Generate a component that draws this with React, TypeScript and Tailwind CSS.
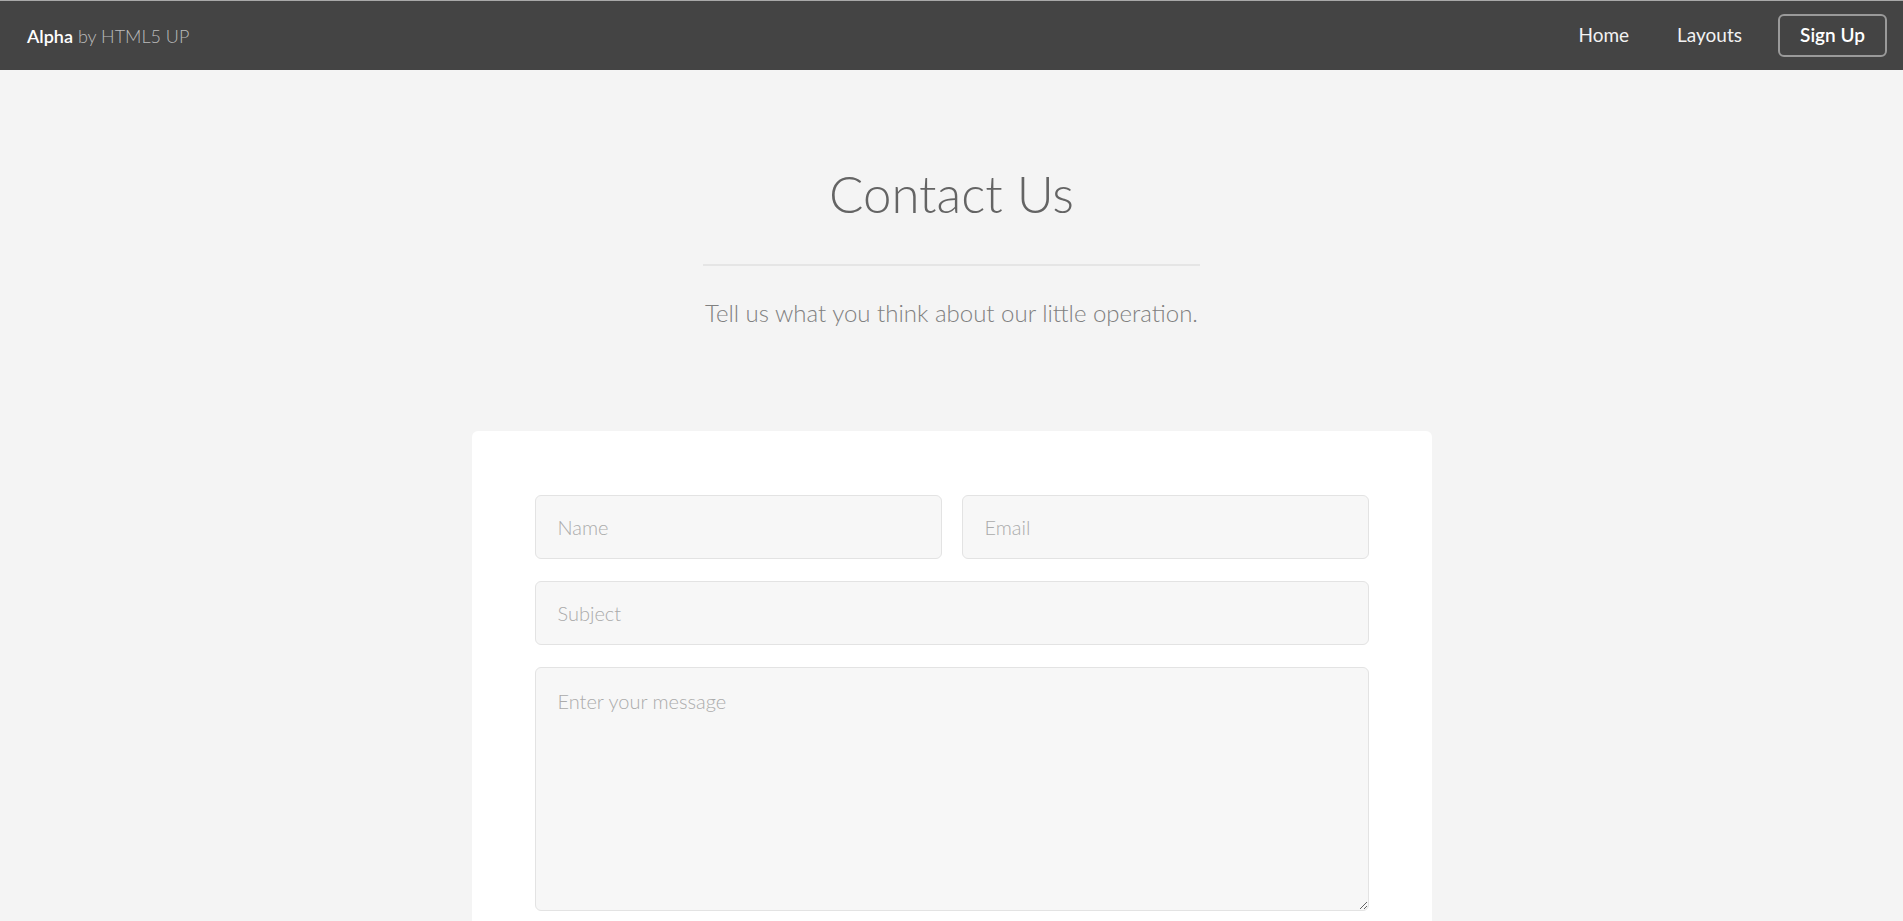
import React from "react";

export default function App() {
  const font = { fontFamily: "Lato, 'Open Sans', sans-serif" };
  return (
    <div className="min-h-screen bg-[#f4f4f4]" style={font}>
      <header className="h-[70px] bg-[#444444] border-t border-[#a9a9a9] flex items-center justify-between pl-[27px] pr-[16px]">
        <div className="text-[18px] leading-none">
          <span className="text-white font-semibold">Alpha</span>
          <span className="text-[#bbbbbb] font-light"> by HTML5 UP</span>
        </div>
        <nav className="flex items-center text-[19px] text-[#f2f2f2]">
          <a className="mr-[48px]">Home</a>
          <a className="mr-[36px]">Layouts</a>
          <a className="h-[43px] w-[109px] flex items-center justify-center rounded-[6px] border-2 border-[#9a9a9a] text-white font-semibold">
            Sign Up
          </a>
        </nav>
      </header>
      <main className="flex flex-col items-center">
        <h1 className="mt-[92px] text-[51px] leading-[64px] font-light text-[#646464]">Contact Us</h1>
        <div className="mt-[38px] w-[497px] h-[2px] bg-[#e5e5e5]" />
        <p className="mt-[30px] text-[24px] leading-[34px] font-light text-[#808080]">
          Tell us what you think about our little operation.
        </p>
        <div className="mt-[101px] w-[960px] bg-white rounded-t-[6px] px-[63px] pt-[64px] pb-[64px]">
          <div className="flex flex-col gap-[22px]">
            <div className="flex gap-[20px]">
              <input
                placeholder="Name"
                className="flex-1 h-[64px] px-[22px] rounded-[6px] border border-[#e3e3e3] bg-[#f7f7f7] text-[20px] font-light placeholder:text-[#ababab] outline-none"
              />
              <input
                placeholder="Email"
                className="flex-1 h-[64px] px-[22px] rounded-[6px] border border-[#e3e3e3] bg-[#f7f7f7] text-[20px] font-light placeholder:text-[#ababab] outline-none"
              />
            </div>
            <input
              placeholder="Subject"
              className="h-[64px] px-[22px] rounded-[6px] border border-[#e3e3e3] bg-[#f7f7f7] text-[20px] font-light placeholder:text-[#ababab] outline-none"
            />
            <textarea
              placeholder="Enter your message"
              className="h-[244px] px-[22px] py-[18px] rounded-[6px] border border-[#e3e3e3] bg-[#f7f7f7] text-[20px] font-light placeholder:text-[#ababab] outline-none"
            />
          </div>
        </div>
      </main>
    </div>
  );
}
